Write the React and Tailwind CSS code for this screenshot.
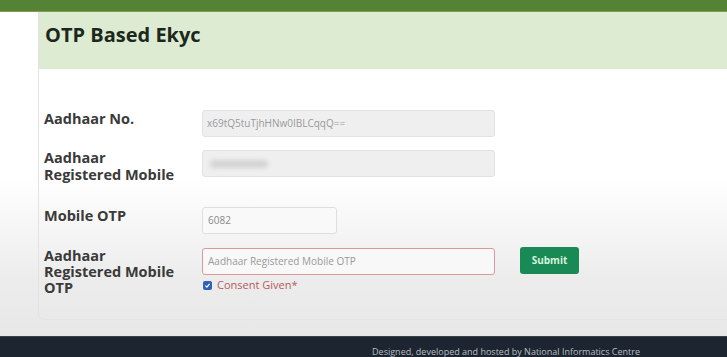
import React from "react";

export default function App() {
  const font = { fontFamily: '"Open Sans", "Noto Sans", sans-serif' };
  return (
    <div
      className="w-[727px] h-[357px] flex flex-col overflow-hidden bg-[linear-gradient(to_bottom,#ffffff_0%,#ffffff_50%,#ececec_78%,#e6e6e6_100%)]"
      style={font}
    >
      <div className="h-[12px] bg-[#548335] border-b border-[#8a9a4a] shrink-0" />
      <div className="flex-1 flex flex-col ml-[38px]">
        <div className="flex-1 flex flex-col border-l border-b border-[#e3e3e3] rounded-bl-[6px]">
          <div className="h-[57px] bg-[#deebd3] pl-[6px] pt-[9px] shrink-0">
            <h1 className="text-[20px] font-bold text-[#1c281c] leading-[27px]">OTP Based Ekyc</h1>
          </div>
          <div className="flex flex-col pl-[5px]">
            {/* Row 1 */}
            <div className="flex items-start mt-[41px]">
              <div className="w-[158px] text-[14.5px] font-bold text-[#3a3a3a] leading-[17px]">
                Aadhaar No.
              </div>
              <div className="w-[293px] h-[27px] bg-[#efefef] border border-[#e2e2e2] rounded-[3px] flex items-center pl-[4px] text-[10px] text-[#9a9a9a]">
                x69tQ5tuTjhHNw0IBLCqqQ==
              </div>
            </div>
            {/* Row 2 */}
            <div className="flex items-start mt-[13px]">
              <div className="w-[158px] text-[14.5px] font-bold text-[#3a3a3a] leading-[17px] -mt-[1px]">
                Aadhaar
                <br />
                Registered Mobile
              </div>
              <div className="w-[293px] h-[27px] bg-[#efefef] border border-[#e2e2e2] rounded-[3px] flex items-center pl-[7px]">
                <span className="block w-[58px] h-[8px] rounded-full bg-[#d4d4d4] blur-[2px]" />
              </div>
            </div>
            {/* Row 3 */}
            <div className="flex items-start mt-[24px]">
              <div className="w-[158px] text-[14.5px] font-bold text-[#3a3a3a] leading-[17px]">
                Mobile OTP
              </div>
              <div className="w-[135px] h-[27px] bg-[#f9f9f9] border border-[#dedede] rounded-[3px] flex items-center pl-[5px] text-[10px] text-[#8a8a8a]">
                6082
              </div>
            </div>
            {/* Row 4 */}
            <div className="flex items-start mt-[14px]">
              <div className="w-[158px] text-[14.5px] font-bold text-[#3a3a3a] leading-[16px]">
                Aadhaar
                <br />
                Registered Mobile
                <br />
                OTP
              </div>
              <div className="flex flex-col">
                <div className="w-[293px] h-[27px] bg-[#f8f8f8] border border-[#d99a9a] rounded-[3px] flex items-center pl-[5px] text-[10px] text-[#9a9a9a]">
                  Aadhaar Registered Mobile OTP
                </div>
                <div className="flex items-center mt-[3px] ml-[1px]">
                  <span className="w-[9px] h-[9px] rounded-[2px] bg-[#2a63b8] flex items-center justify-center">
                    <svg width="7" height="7" viewBox="0 0 10 10">
                      <path d="M2 5.2 L4.2 7.3 L8 2.8" fill="none" stroke="#ffffff" strokeWidth="1.8" />
                    </svg>
                  </span>
                  <span className="ml-[5px] text-[11px] text-[#b65a5a] leading-[14px]">Consent Given*</span>
                </div>
              </div>
              <button className="ml-[25px] -mt-[1px] w-[59px] h-[27px] bg-[#198a55] rounded-[3px] text-[10px] font-bold text-[#d6f3df]">
                Submit
              </button>
            </div>
          </div>
        </div>
        <div className="h-[16px] shrink-0" />
      </div>
      <div className="h-[21px] bg-[#1d2630] border-t border-[#3a4048] shrink-0 flex items-center justify-end pr-[87px]">
        <span className="text-[9px] text-[#b9bdc2] leading-none mt-[8px]">
          Designed, developed and hosted by National Informatics Centre
        </span>
      </div>
    </div>
  );
}
